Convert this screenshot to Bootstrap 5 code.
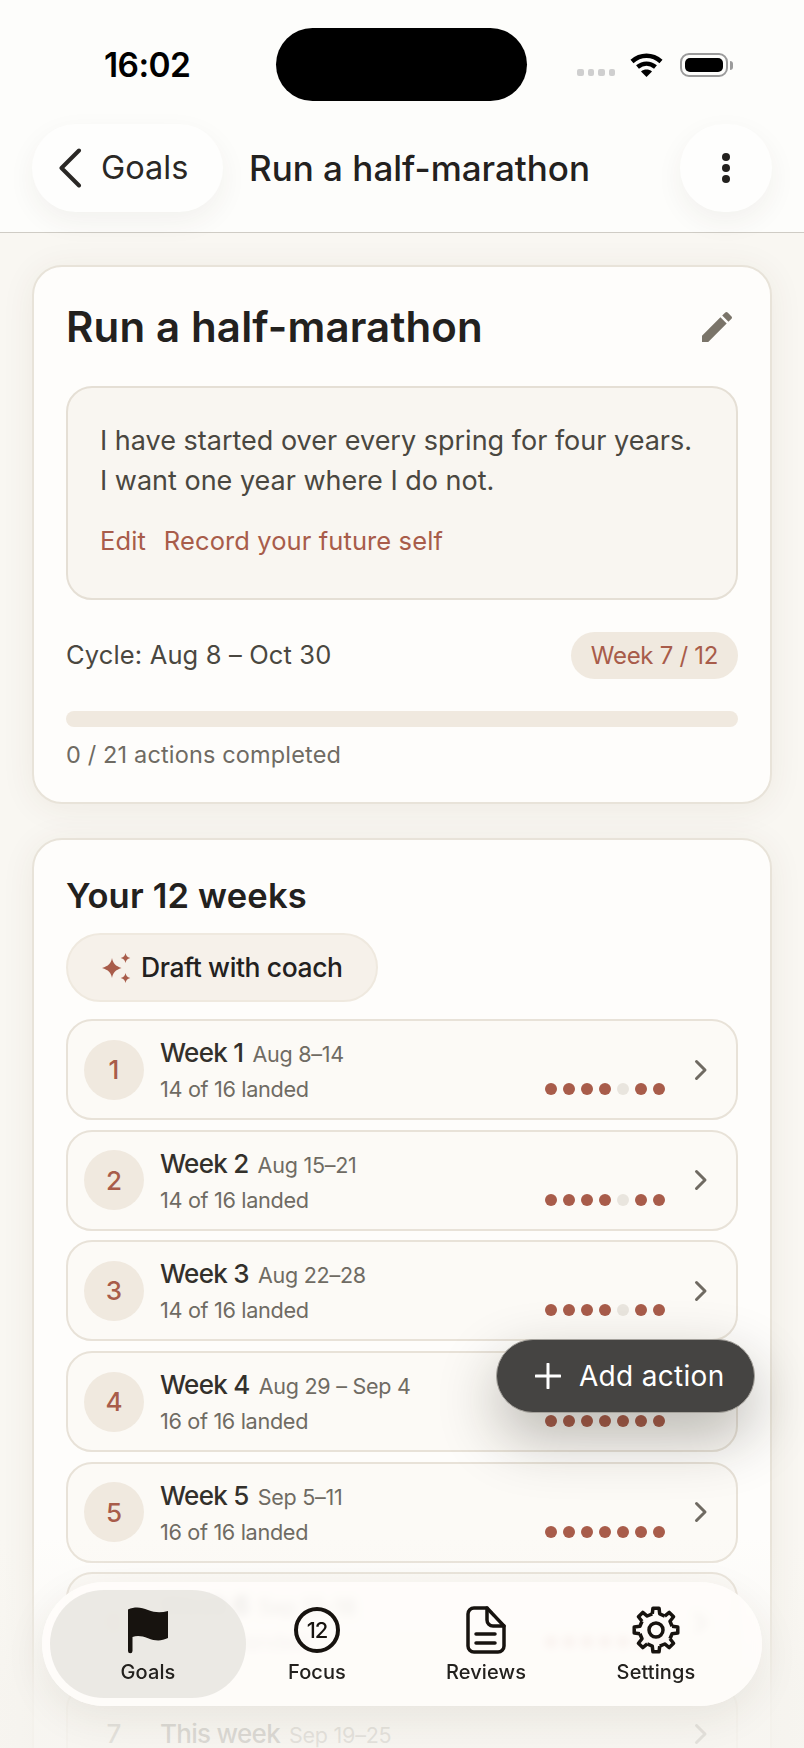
<!DOCTYPE html>
<html lang="en">
<head>
    <meta charset="UTF-8">
    <meta name="viewport" content="width=device-width, initial-scale=1.0">
    <title>Run a half-marathon</title>
    <link rel="stylesheet" href="https://cdn.jsdelivr.net/npm/bootstrap@5.3.0/dist/css/bootstrap.min.css">
    <style>
        html, body {
            height: 1748px;
        }
        body {
            position: relative;
            overflow: hidden;
            background: #f9f7f2;
            color: #23211e;
            font-family: Inter, "Noto Sans", sans-serif;
        }
        /* header */
        .top-bar {
            height: 233px;
            background: #fdfdfb;
            border-bottom: 1px solid #cfccc5;
        }
        .status-row {
            height: 124px;
            padding: 28px 0 0 104px;
        }
        .clock {
            width: 88px;
            margin-top: 18px;
            font-size: 33.5px;
            line-height: 38px;
            font-weight: 600;
            letter-spacing: -.6px;
            color: #000;
        }
        .island {
            width: 251px;
            height: 73px;
            margin-left: 84px;
            border-radius: 37px;
            background: #000;
        }
        .signal-dots {
            margin-left: 50px;
            margin-top: 41px;
            gap: 4px;
        }
        .signal-dots i {
            width: 6.5px;
            height: 7px;
            border-radius: 2px;
            background: #cfcfcf;
        }
        .wifi-ico {
            margin: 25px 0 0 15px;
        }
        .battery {
            width: 48px;
            height: 24px;
            margin: 25px 0 0 17px;
            padding: 3px;
            border: 2px solid #9b9b9b;
            border-radius: 9px;
        }
        .battery i {
            display: block;
            height: 100%;
            border-radius: 5px;
            background: #000;
        }
        .battery-nub {
            width: 3px;
            height: 9px;
            margin: 33px 0 0 2px;
            border-radius: 0 3px 3px 0;
            background: #9b9b9b;
        }
        .nav-row {
            padding: 0 32px;
            height: 88px;
        }
        .pill-btn {
            height: 88px;
            border: 0;
            border-radius: 44px;
            background: #fefefd;
            box-shadow: 0 10px 28px rgba(60, 50, 30, .06);
            color: #2a2825;
        }
        .back-btn {
            width: 191px;
            padding: 0 0 0 26px;
            gap: 19px;
            font-size: 32.5px;
        }
        .more-btn {
            width: 92px;
        }
        .nav-title {
            margin: 0 0 0 26px;
            font-size: 35px;
            font-weight: 500;
        }
        /* cards */
        .page-body {
            padding: 32px 32px 0;
        }
        .goal-card {
            border: 2px solid #e8e3d9;
            border-radius: 30px;
            background: #fefdfb;
            box-shadow: 0 4px 34px rgba(80, 60, 30, .07);
        }
        .goal-card + .goal-card {
            margin-top: 34px;
        }
        .goal-main {
            padding: 37px 32px 31px;
        }
        .goal-title {
            margin: 0;
            font-size: 42px;
            line-height: 46px;
            font-weight: 600;
            letter-spacing: .15px;
        }
        .edit-ico {
            margin-right: 1px;
        }
        .why-box {
            height: 214px;
            margin-top: 36px;
            padding: 33px 32px 0;
            border: 2px solid #e5dfd5;
            border-radius: 26px;
            background: #f9f6f1;
            font-size: 27px;
            line-height: 40px;
            color: #4a4740;
        }
        .why-links {
            margin-top: 20px;
            gap: 18px;
            font-size: 25.5px;
            letter-spacing: .1px;
            color: #a85c4a;
        }
        .cycle-row {
            margin-top: 32px;
            font-size: 25.5px;
            letter-spacing: .15px;
            color: #4a4740;
        }
        .week-tag {
            padding: 0 20px;
            border-radius: 24px;
            background: #f0e9df;
            font-size: 24px;
            font-weight: 400;
            line-height: 47px;
            letter-spacing: -.3px;
            color: #a85c4a;
        }
        .goal-progress {
            height: 16px;
            margin-top: 32px;
            border-radius: 8px;
            background: #f0e9df;
        }
        .done-note {
            margin: 12px 0 0;
            font-size: 23.5px;
            line-height: 32px;
            letter-spacing: .15px;
            color: #6f6b63;
        }
        .weeks-main {
            padding: 36px 32px 0;
        }
        .weeks-title {
            margin: 0;
            font-size: 34.5px;
            line-height: 40px;
            font-weight: 600;
            letter-spacing: .2px;
        }
        .coach-btn {
            width: 312px;
            height: 69px;
            margin-top: 17px;
            padding: 0 0 0 33px;
            gap: 10px;
            border: 2px solid #efe9df;
            border-radius: 35px;
            background: #f6f1ea;
            font-size: 26.5px;
            font-weight: 500;
            letter-spacing: -.4px;
            color: #23211e;
        }
        /* week rows */
        .week-list {
            margin-top: 17px;
            gap: 9.7px;
        }
        .week-row {
            height: 101px;
            padding: 0 28px 0 16px;
            gap: 16px;
            border: 2px solid #e8e2d8;
            border-radius: 26px;
            background: #fcfaf6;
        }
        .week-num {
            width: 60px;
            height: 60px;
            border-radius: 50%;
            background: #f0e9df;
            font-size: 26px;
            font-weight: 500;
            color: #a85c4a;
        }
        .week-num.bare {
            background: transparent;
            color: #6f6b63;
        }
        .week-text {
            line-height: 34px;
            margin-top: 3px;
            padding-right: 13px;
        }
        .week-text .week-landed,
        .week-text .dot-row {
            margin-top: -1px;
        }
        .week-name {
            font-size: 26px;
            font-weight: 500;
            letter-spacing: -.7px;
            color: #33302b;
        }
        .week-date {
            margin-left: 9px;
            font-size: 21.5px;
            letter-spacing: -.25px;
            color: #6f6b63;
        }
        .week-landed {
            font-size: 21.7px;
            letter-spacing: -.35px;
            color: #6f6b63;
        }
        .dot-row {
            gap: 6px;
        }
        .dot-row i {
            width: 12px;
            height: 12px;
            border-radius: 50%;
            background: #a85c4a;
        }
        .dot-row i.off {
            background: #e9e5de;
        }
        /* overlays */
        .bottom-fade {
            position: absolute;
            left: 0;
            right: 0;
            bottom: 0;
            height: 350px;
            background: linear-gradient(to bottom, rgba(246, 244, 239, 0) 40%, rgba(246, 244, 239, .2) 55%, rgba(246, 244, 239, .86) 84%);
            pointer-events: none;
        }
        .add-fab {
            position: absolute;
            left: 496px;
            top: 1339px;
            width: 259px;
            height: 74px;
            padding: 0 0 0 38px;
            gap: 18px;
            border: 1.5px solid #a5a29c;
            border-radius: 37px;
            background: #454442;
            box-shadow: 0 24px 60px rgba(30, 25, 15, .3);
            font-size: 28px;
            letter-spacing: .3px;
            color: #fff;
        }
        .tab-bar {
            position: absolute;
            left: 42px;
            top: 1582px;
            width: 720px;
            height: 124px;
            padding: 8px;
            display: grid;
            grid-template-columns: 196px 142px 196px 144px;
            border-radius: 62px;
            background: rgba(255, 253, 250, .86);
            backdrop-filter: blur(4px);
            box-shadow: 0 12px 40px rgba(60, 50, 30, .08);
        }
        .tab-item {
            padding-top: 16px;
            font-size: 20px;
            font-weight: 500;
            line-height: 26px;
            letter-spacing: .1px;
            color: #23211e;
        }
        .tab-item.now {
            border-radius: 54px;
            background: rgba(232, 229, 224, .85);
        }
        .tab-item svg {
            display: block;
            margin-bottom: 5px;
        }
    </style>
</head>
<body>
    <svg width="0" height="0" class="position-absolute">
        <symbol id="row-chevron" viewBox="0 0 14 22">
            <path d="M2.5 2.5 11 11l-8.500 8.500" fill="none" stroke="#6f6a62" stroke-width="3" stroke-linecap="round" stroke-linejoin="round"/>
        </symbol>
    </svg>

    <header class="top-bar">
        <div class="status-row d-flex align-items-start">
            <div class="clock">16:02</div>
            <div class="island"></div>
            <div class="signal-dots d-flex"><i></i><i></i><i></i><i></i></div>
            <svg class="wifi-ico" width="33" height="24" viewBox="0 0 33 24">
                <path d="M2 8.500C10.500 .8 22.500 .8 31 8.500" fill="none" stroke="#000" stroke-width="4.500"/>
                <path d="M7.500 14C13 9.500 20 9.500 25.500 14" fill="none" stroke="#000" stroke-width="4.500"/>
                <path d="M11 18.500c3.200-2.600 7.800-2.600 11 0L16.500 24z" fill="#000"/>
            </svg>
            <div class="battery"><i></i></div>
            <div class="battery-nub"></div>
        </div>
        <div class="nav-row d-flex align-items-center">
            <button class="pill-btn back-btn d-flex align-items-center" type="button">
                <svg width="24" height="40" viewBox="0 0 24 40"><path d="M21 2.500 3.500 20 21 37.500" fill="none" stroke="#2a2825" stroke-width="4" stroke-linecap="round" stroke-linejoin="round"/></svg>
                <span>Goals</span>
            </button>
            <h1 class="nav-title">Run a half-marathon</h1>
            <button class="pill-btn more-btn ms-auto d-flex align-items-center justify-content-center" type="button">
                <svg width="10" height="32" viewBox="0 0 10 32"><circle cx="5" cy="5" r="4" fill="#23211e"/><circle cx="5" cy="16" r="4" fill="#23211e"/><circle cx="5" cy="27" r="4" fill="#23211e"/></svg>
            </button>
        </div>
    </header>

    <main class="page-body">
        <section class="card goal-card">
            <div class="goal-main">
                <div class="d-flex align-items-center justify-content-between">
                    <h2 class="goal-title">Run a half-marathon</h2>
                    <svg class="edit-ico" width="40" height="40" viewBox="0 0 24 24"><path fill="#7a7469" d="M3 17.250V21h3.750L17.810 9.940l-3.750-3.750L3 17.250zM20.710 7.040c.39-.39.39-1.020 0-1.410l-2.340-2.340a.996.996 0 0 0-1.410 0l-1.830 1.830 3.750 3.750 1.830-1.830z"/></svg>
                </div>
                <div class="why-box">
                    I have started over every spring for four years.<br>
                    I want one year where I do not.
                    <div class="why-links d-flex"><span>Edit</span><span>Record your future self</span></div>
                </div>
                <div class="cycle-row d-flex align-items-center justify-content-between">
                    <span>Cycle: Aug 8 – Oct 30</span>
                    <span class="week-tag">Week 7 / 12</span>
                </div>
                <div class="progress goal-progress"></div>
                <p class="done-note">0 / 21 actions completed</p>
            </div>
        </section>

        <section class="card goal-card">
            <div class="weeks-main">
                <h2 class="weeks-title">Your 12 weeks</h2>
                <button class="btn coach-btn d-flex align-items-center" type="button">
                    <svg width="30" height="30" viewBox="0 0 30 30" fill="#a85c4a">
                        <path d="M11 5c1 5.500 3.500 8 9.500 10-6 2-8.500 4.500-9.500 10-1-5.500-3.500-8-10-10 6.500-2 9-4.500 10-10z"/>
                        <path d="M24.500 0c.5 2.800 1.700 4 4.800 5-3.100 1-4.300 2.200-4.800 5-.5-2.800-1.700-4-4.800-5 3.100-1 4.300-2.200 4.800-5z"/>
                        <path d="M24.500 20c.5 2.800 1.700 4 4.800 5-3.100 1-4.300 2.200-4.800 5-.5-2.800-1.700-4-4.800-5 3.100-1 4.300-2.200 4.800-5z"/>
                    </svg>
                    <span>Draft with coach</span>
                </button>

                <div class="week-list d-flex flex-column">
                    <div class="week-row d-flex align-items-center">
                        <div class="week-num d-flex flex-shrink-0 align-items-center justify-content-center">1</div>
                        <div class="week-text flex-grow-1 d-flex flex-column">
                            <div><span class="week-name">Week 1</span><span class="week-date">Aug 8–14</span></div>
                            <div class="d-flex align-items-center justify-content-between">
                                <span class="week-landed">14 of 16 landed</span>
                                <div class="dot-row d-flex"><i></i><i></i><i></i><i></i><i class="off"></i><i></i><i></i></div>
                            </div>
                        </div>
                        <svg width="14" height="22"><use href="#row-chevron"/></svg>
                    </div>
                    <div class="week-row d-flex align-items-center">
                        <div class="week-num d-flex flex-shrink-0 align-items-center justify-content-center">2</div>
                        <div class="week-text flex-grow-1 d-flex flex-column">
                            <div><span class="week-name">Week 2</span><span class="week-date">Aug 15–21</span></div>
                            <div class="d-flex align-items-center justify-content-between">
                                <span class="week-landed">14 of 16 landed</span>
                                <div class="dot-row d-flex"><i></i><i></i><i></i><i></i><i class="off"></i><i></i><i></i></div>
                            </div>
                        </div>
                        <svg width="14" height="22"><use href="#row-chevron"/></svg>
                    </div>
                    <div class="week-row d-flex align-items-center">
                        <div class="week-num d-flex flex-shrink-0 align-items-center justify-content-center">3</div>
                        <div class="week-text flex-grow-1 d-flex flex-column">
                            <div><span class="week-name">Week 3</span><span class="week-date">Aug 22–28</span></div>
                            <div class="d-flex align-items-center justify-content-between">
                                <span class="week-landed">14 of 16 landed</span>
                                <div class="dot-row d-flex"><i></i><i></i><i></i><i></i><i class="off"></i><i></i><i></i></div>
                            </div>
                        </div>
                        <svg width="14" height="22"><use href="#row-chevron"/></svg>
                    </div>
                    <div class="week-row d-flex align-items-center">
                        <div class="week-num d-flex flex-shrink-0 align-items-center justify-content-center">4</div>
                        <div class="week-text flex-grow-1 d-flex flex-column">
                            <div><span class="week-name">Week 4</span><span class="week-date">Aug 29 – Sep 4</span></div>
                            <div class="d-flex align-items-center justify-content-between">
                                <span class="week-landed">16 of 16 landed</span>
                                <div class="dot-row d-flex"><i></i><i></i><i></i><i></i><i></i><i></i><i></i></div>
                            </div>
                        </div>
                        <svg width="14" height="22"><use href="#row-chevron"/></svg>
                    </div>
                    <div class="week-row d-flex align-items-center">
                        <div class="week-num d-flex flex-shrink-0 align-items-center justify-content-center">5</div>
                        <div class="week-text flex-grow-1 d-flex flex-column">
                            <div><span class="week-name">Week 5</span><span class="week-date">Sep 5–11</span></div>
                            <div class="d-flex align-items-center justify-content-between">
                                <span class="week-landed">16 of 16 landed</span>
                                <div class="dot-row d-flex"><i></i><i></i><i></i><i></i><i></i><i></i><i></i></div>
                            </div>
                        </div>
                        <svg width="14" height="22"><use href="#row-chevron"/></svg>
                    </div>
                    <div class="week-row d-flex align-items-center">
                        <div class="week-num d-flex flex-shrink-0 align-items-center justify-content-center">6</div>
                        <div class="week-text flex-grow-1 d-flex flex-column">
                            <div><span class="week-name">Week 6</span><span class="week-date">Sep 12–18</span></div>
                            <div class="d-flex align-items-center justify-content-between">
                                <span class="week-landed">16 of 16 landed</span>
                                <div class="dot-row d-flex"><i></i><i></i><i></i><i></i><i></i><i></i><i></i></div>
                            </div>
                        </div>
                        <svg width="14" height="22"><use href="#row-chevron"/></svg>
                    </div>
                    <div class="week-row d-flex align-items-center">
                        <div class="week-num bare d-flex flex-shrink-0 align-items-center justify-content-center">7</div>
                        <div class="flex-grow-1"><span class="week-name">This week</span><span class="week-date">Sep 19–25</span></div>
                        <svg width="14" height="22"><use href="#row-chevron"/></svg>
                    </div>
                </div>
            </div>
        </section>
    </main>

    <div class="bottom-fade"></div>

    <button class="btn add-fab d-flex align-items-center" type="button">
        <svg width="26" height="26" viewBox="0 0 26 26"><path d="M13 1v24M1 13h24" stroke="#fff" stroke-width="3" stroke-linecap="round"/></svg>
        <span>Add action</span>
    </button>

    <nav class="tab-bar">
        <div class="tab-item now d-flex flex-column align-items-center">
            <svg width="44" height="48" viewBox="0 0 44 48">
                <path fill="#17130f" d="M2 3.500C9 .5 15 1 22 4c7 2.800 13 2.800 20 1v27c-7 3.500-13 3-20 .2-6-2.400-11-3-15.500-1.200V45a2.200 2.200 0 0 1-4.500 0z"/>
            </svg>
            <span>Goals</span>
        </div>
        <div class="tab-item d-flex flex-column align-items-center">
            <svg width="48" height="48" viewBox="0 0 48 48">
                <circle cx="24" cy="24" r="21" fill="none" stroke="#17130f" stroke-width="4"/>
                <text x="24" y="32" text-anchor="middle" font-family="Inter, sans-serif" font-size="22" font-weight="500" letter-spacing="-1" fill="#17130f">12</text>
            </svg>
            <span>Focus</span>
        </div>
        <div class="tab-item d-flex flex-column align-items-center">
            <svg width="40" height="48" viewBox="0 0 40 48" fill="none" stroke="#17130f" stroke-width="3.500" stroke-linecap="round" stroke-linejoin="round">
                <path d="M8 2h13l17 18v20a6 6 0 0 1-6 6H8a6 6 0 0 1-6-6V8a6 6 0 0 1 6-6z"/>
                <path d="M21 2v12a6 6 0 0 0 6 6h11"/>
                <path d="M10 28h19M10 37h19"/>
            </svg>
            <span>Reviews</span>
        </div>
        <div class="tab-item d-flex flex-column align-items-center">
            <svg width="48" height="48" viewBox="-24 -24 48 48" fill="none" stroke="#17130f" stroke-width="3.500" stroke-linejoin="round">
                <path id="gear-tooth" d="M-3.710-16.080-3.060-21.790H3.060L3.710-16.080 8.740-13.990"/>
                <use href="#gear-tooth" transform="rotate(45)"/>
                <use href="#gear-tooth" transform="rotate(90)"/>
                <use href="#gear-tooth" transform="rotate(135)"/>
                <use href="#gear-tooth" transform="rotate(180)"/>
                <use href="#gear-tooth" transform="rotate(225)"/>
                <use href="#gear-tooth" transform="rotate(270)"/>
                <use href="#gear-tooth" transform="rotate(315)"/>
                <circle r="7"/>
            </svg>
            <span>Settings</span>
        </div>
    </nav>

    <script src="https://cdn.jsdelivr.net/npm/bootstrap@5.3.0/dist/js/bootstrap.bundle.min.js"></script>
</body>
</html>
